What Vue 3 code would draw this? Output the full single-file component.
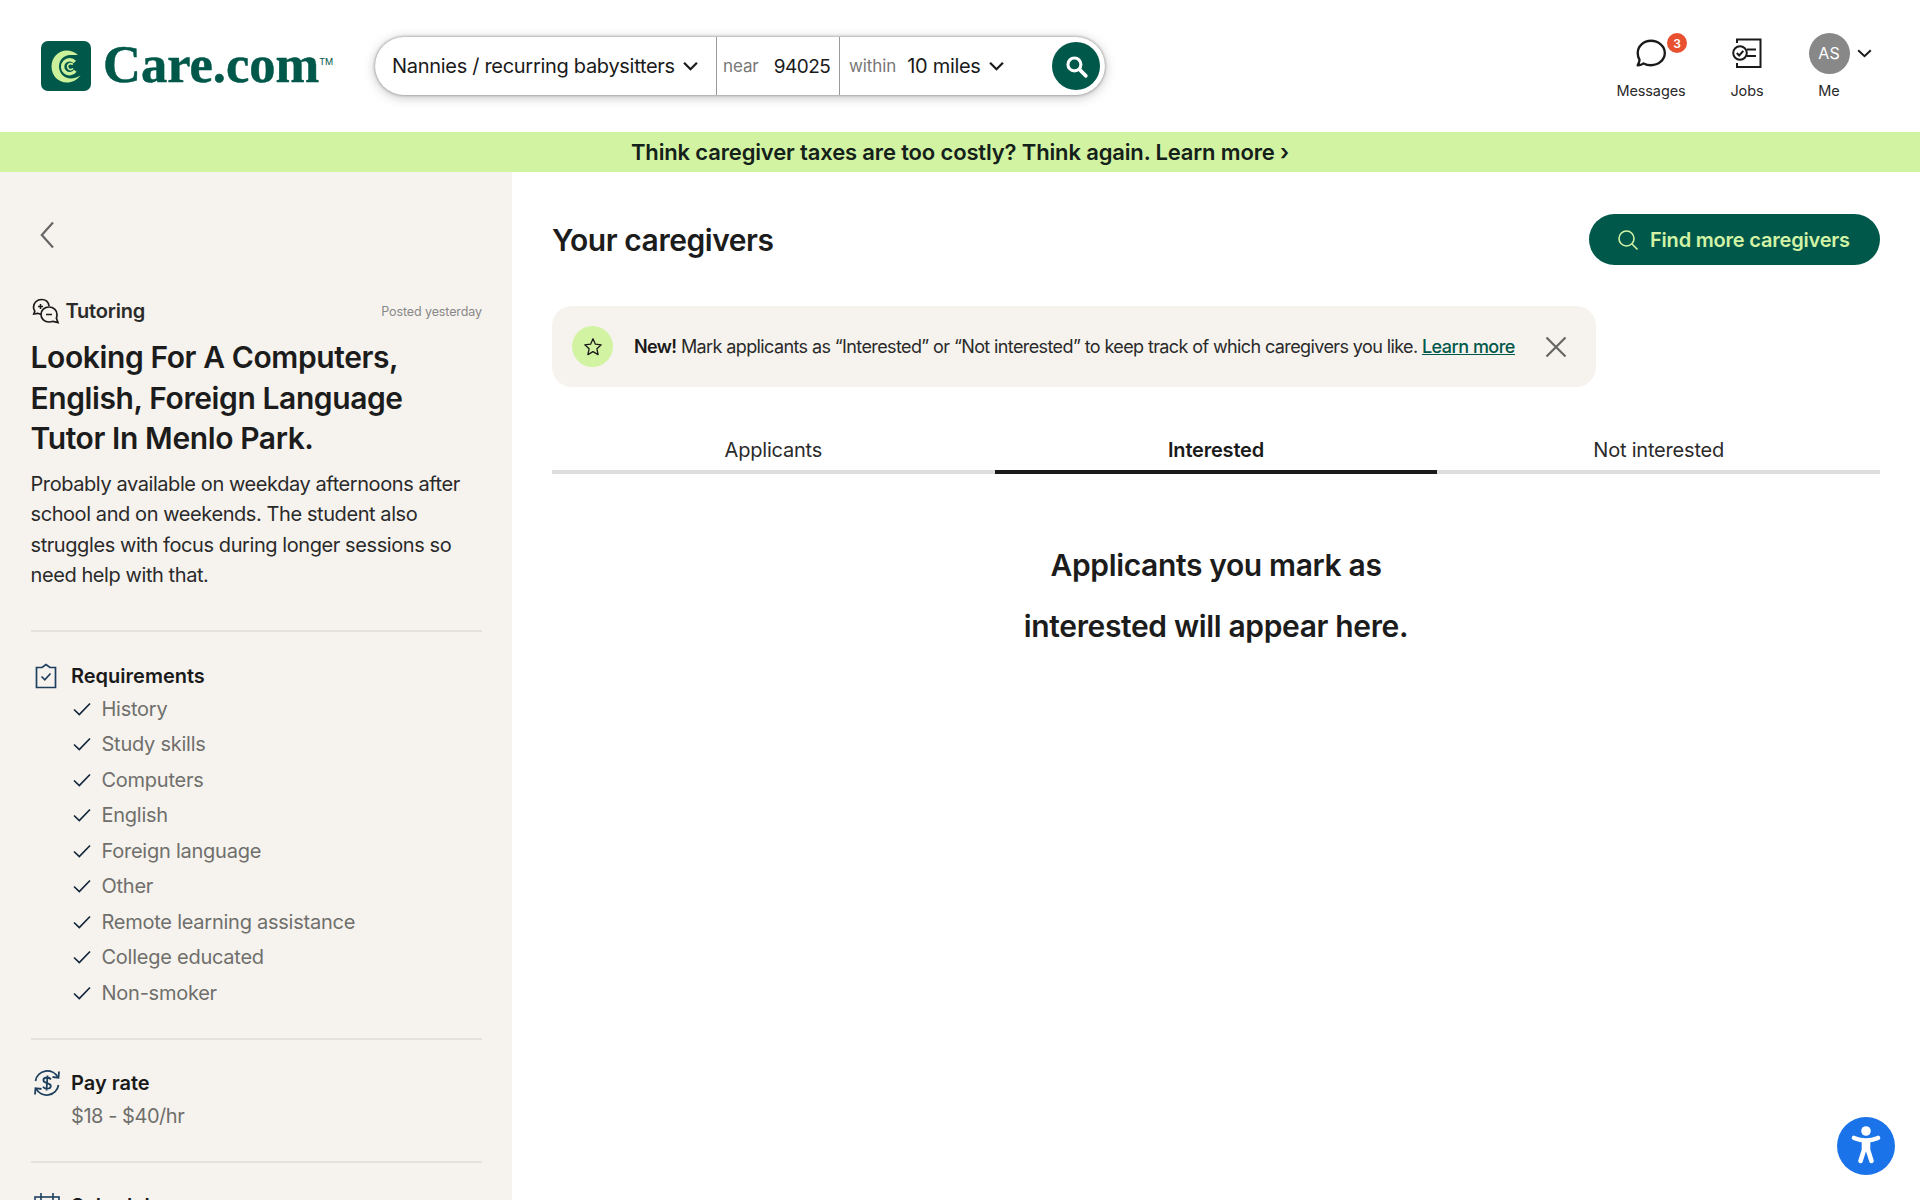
<script setup>
const reqs = ['History','Study skills','Computers','English','Foreign language','Other','Remote learning assistance','College educated','Non-smoker']
const tabs = [
  { label: 'Applicants', active: false },
  { label: 'Interested', active: true },
  { label: 'Not interested', active: false },
]
</script>

<template>
  <div class="page">
    <header class="header">
      <div class="logo">
        <svg class="logo-mark" viewBox="0 0 50 50" width="50" height="50">
          <rect width="50" height="50" rx="7" fill="#00584a"/>
          <path d="M37 14C33 10.500 29 9.500 26 9.500C17 9.500 10.500 16.500 10.500 25.500C10.500 34.500 17 41.500 26 41.500C31 41.500 36 39 39.500 34.500C36 36.500 33 37.500 30 37.500C23 37.500 18 32 18 25.500C18 19 23 14 29 14C32 14 34.500 14 37 14Z" fill="#cdf09a"/>
          <path d="M33.800 21A7 7 0 1 0 34.300 29.800" fill="none" stroke="#cdf09a" stroke-width="3.400"/>
          <path d="M31.800 23.600A3 3 0 1 0 32 27.400" fill="none" stroke="#cdf09a" stroke-width="1.600"/>
        </svg>
        <span class="wordmark">Care.com</span><span class="tm">TM</span>
      </div>

      <div class="search">
        <div class="seg seg-type">
          <span class="val">Nannies / recurring babysitters</span>
          <svg class="chev" viewBox="0 0 14 9" width="15" height="10"><path d="M1 1.500L7 7.500L13 1.500" fill="none" stroke="#1a1a1a" stroke-width="2.100"/></svg>
        </div>
        <div class="seg seg-near"><span class="hint">near</span><span class="val zip">94025</span></div>
        <div class="seg seg-within">
          <span class="hint">within</span><span class="val">10 miles</span>
          <svg class="chev" viewBox="0 0 14 9" width="15" height="10"><path d="M1 1.500L7 7.500L13 1.500" fill="none" stroke="#1a1a1a" stroke-width="2.100"/></svg>
        </div>
        <button class="search-btn" aria-label="Search">
          <svg viewBox="0 0 24 24" width="25" height="25"><circle cx="10" cy="10" r="6.200" fill="none" stroke="#fff" stroke-width="3"/><path d="M15 15L21 21" stroke="#fff" stroke-width="3.400" stroke-linecap="round"/></svg>
        </button>
      </div>

      <nav class="nav">
        <div class="nav-item nav-msg">
          <div class="nav-icon">
            <svg viewBox="0 0 32 30" width="34" height="32"><path d="M3.500 15C3.500 8.500 9 3.500 16 3.500C23 3.500 29 8.500 29 15C29 21.500 23 26.500 16 26.500C13.500 26.500 11 25.900 9 24.800C7.500 26 5.500 26.600 3.500 26.500C4.500 25 5 23.500 5.200 21.500C4 19.500 3.500 17.300 3.500 15Z" fill="none" stroke="#1a1a1a" stroke-width="2.200" stroke-linejoin="round"/></svg>
            <span class="badge">3</span>
          </div>
          <span class="nav-label">Messages</span>
        </div>
        <div class="nav-item nav-jobs">
          <div class="nav-icon">
            <svg viewBox="0 0 32 32" width="32" height="32"><path d="M6 6V2.500H29.500V30H6V26" fill="none" stroke="#1a1a1a" stroke-width="2"/><circle cx="9" cy="16" r="6.800" fill="none" stroke="#1a1a1a" stroke-width="2"/><path d="M5.800 16L8.200 18.500L12.300 13.800" fill="none" stroke="#1a1a1a" stroke-width="2"/><path d="M15.800 12.500H25M15.800 19H25" stroke="#1a1a1a" stroke-width="2"/></svg>
          </div>
          <span class="nav-label">Jobs</span>
        </div>
        <div class="nav-item nav-me">
          <div class="nav-icon">
            <span class="avatar">AS</span>
            <svg class="me-chev" viewBox="0 0 16 10" width="15" height="9"><path d="M1 1.500L8 8L15 1.500" fill="none" stroke="#1a1a1a" stroke-width="2.200"/></svg>
          </div>
          <span class="nav-label">Me</span>
        </div>
      </nav>
    </header>

    <div class="promo">Think caregiver taxes are too costly? Think again. Learn more ›</div>

    <div class="body">
      <aside class="side">
        <svg class="back" viewBox="0 0 14 28" width="14" height="28"><path d="M13 1.500L1.800 14L13 26.500" fill="none" stroke="#666" stroke-width="2.200"/></svg>

        <div class="job-top">
          <div class="job-type">
            <svg viewBox="0 0 28 28" width="28" height="28" fill="none" stroke="#1a1a1a" stroke-width="1.700">
              <path d="M17 9C16.500 5 13.500 2.500 9.500 2.500C5 2.500 1.500 6 1.500 10C1.500 11.500 2 13 2.800 14.200L1.800 17L5.500 16.300C6.500 16.800 7.500 17 9 17.200"/>
              <path d="M17 10C21.500 10 25 13 25 17.500C25 19.300 24.600 20.500 24.400 21.200L26 25.500L21 24.300C20 24.800 18.500 25 17 25C12.500 25 9 21.800 9 17.500C9 13.300 12.500 10 17 10Z"/>
              <path d="M6 9.500H11M8.500 7V12M14 17.500H20M17 14.500V14.600M17 20.400V20.500" stroke-width="1.500"/>
            </svg>
            <span>Tutoring</span>
          </div>
          <span class="posted">Posted yesterday</span>
        </div>

        <h1 class="job-title">Looking For A Computers, English, Foreign Language Tutor In Menlo Park.</h1>
        <p class="job-desc">Probably available on weekday afternoons after school and on weekends. The student also struggles with focus during longer sessions so need help with that.</p>

        <section class="sec sec-req">
          <div class="sec-head">
            <svg class="sec-icon" viewBox="0 0 24 26" width="24" height="26" fill="none" stroke="#1d3f5e" stroke-width="1.700">
              <path d="M8 4.500H2.500V24.500H21.500V4.500H16L12 1.500Z"/>
              <path d="M7.500 13.500L10.800 16.800L16.500 10.500"/>
            </svg>
            <h2>Requirements</h2>
          </div>
          <ul class="req-list">
            <li v-for="r in reqs" :key="r">
              <svg viewBox="0 0 18 14" width="18" height="14"><path d="M1 7.500L6.300 12.500L17 1.500" fill="none" stroke="#13263b" stroke-width="1.700"/></svg>
              <span>{{ r }}</span>
            </li>
          </ul>
        </section>

        <section class="sec sec-pay">
          <div class="sec-head">
            <svg class="sec-icon" viewBox="0 0 30 30" width="30" height="30" fill="none" stroke="#1d3f5e" stroke-width="1.800">
              <path d="M3.500 13A12 12 0 0 1 26 9.500"/>
              <path d="M27 3.500L26.500 9.800L20.500 9"/>
              <path d="M26.500 17A12 12 0 0 1 4 20.500"/>
              <path d="M3 26.500L3.500 20.200L9.500 21"/>
              <path d="M19 11.500C18 10 16.500 9.500 15 9.500C12.800 9.500 11.400 10.600 11.400 12.200C11.400 16 18.800 14.200 18.800 18C18.800 19.600 17.200 20.700 15 20.700C13.300 20.700 11.800 20 11 18.800M15.500 7.500L14.500 22.500"/>
            </svg>
            <h2>Pay rate</h2>
          </div>
          <div class="pay">$18 - $40/hr</div>
        </section>

        <section class="sec sec-sched">
          <div class="sec-head">
            <svg class="sec-icon" viewBox="0 0 30 30" width="30" height="30" fill="none" stroke="#1d3f5e" stroke-width="1.600">
              <rect x="3" y="6" width="24" height="22"/><path d="M9 2V9M21 2V9M3 12H27"/>
            </svg>
            <h2>Schedule</h2>
          </div>
        </section>
      </aside>

      <main class="main">
        <div class="main-head">
          <h2 class="main-title">Your caregivers</h2>
          <button class="find-btn">
            <svg viewBox="0 0 22 22" width="22" height="22"><circle cx="9.500" cy="9.500" r="7.500" fill="none" stroke="#d2f3a6" stroke-width="1.600"/><path d="M15 15L20.500 20.500" stroke="#d2f3a6" stroke-width="1.600"/></svg>
            <span>Find more caregivers</span>
          </button>
        </div>

        <div class="notice">
          <span class="star">
            <svg viewBox="0 0 20 20" width="20" height="20"><path d="M10 1.800L12.400 7.200L18.200 7.800L13.900 11.800L15.100 17.600L10 14.600L4.900 17.600L6.100 11.800L1.800 7.800L7.600 7.200Z" fill="none" stroke="#1a1a1a" stroke-width="1.300" stroke-linejoin="round"/></svg>
          </span>
          <p class="notice-text"><b>New!</b> Mark applicants as “Interested” or “Not interested” to keep track of which caregivers you like. <a>Learn more</a></p>
          <svg class="close" viewBox="0 0 22 22" width="22" height="22"><path d="M1.500 1.500L20.500 20.500M20.500 1.500L1.500 20.500" stroke="#666" stroke-width="2.200"/></svg>
        </div>

        <div class="tabs">
          <div v-for="t in tabs" :key="t.label" class="tab" :class="{ active: t.active }">{{ t.label }}</div>
        </div>

        <div class="empty">Applicants you mark as<br>interested will appear here.</div>
      </main>
    </div>

    <button class="a11y" aria-label="Accessibility">
      <svg viewBox="0 0 58 58" width="58" height="58">
        <circle cx="29" cy="14" r="4.800" fill="#fff"/>
        <path d="M17 21Q23 23.500 29 23.500Q35 23.500 41 21" fill="none" stroke="#fff" stroke-width="4.600" stroke-linecap="round"/>
        <path d="M23.500 44L27 33V24M34.500 44L31 33V24" fill="none" stroke="#fff" stroke-width="4.600" stroke-linecap="round" stroke-linejoin="round"/>
      </svg>
    </button>
  </div>
</template>

<style>
html, body { margin: 0; background: #fff; height: 100%; overflow: hidden; }
</style>

<style scoped>
* { box-sizing: border-box; }
.page {
  position: relative;
  width: 1920px;
  height: 1200px;
  overflow: hidden;
  font-family: Inter, "Liberation Sans", sans-serif;
  color: #1a1a1a;
  background: #fff;
}
.header {
  height: 132px;
  display: flex;
  align-items: flex-start;
  padding: 37px 0 0 41px;
}
.logo {
  display: flex;
  align-items: center;
  width: 334px;
  height: 58px;
  flex: none;
}
.logo-mark { flex: none; margin-right: 12px; }
.wordmark {
  font-family: "Liberation Serif", serif;
  font-weight: 700;
  font-size: 52.500px;
  line-height: 58px;
  margin-bottom: 4px;
  color: #00584a;
  -webkit-text-stroke: 0.5px #00584a;
}
.tm {
  font-size: 9px;
  color: #00584a;
  align-self: flex-start;
  margin-top: 19px;
}
.search {
  display: flex;
  align-items: center;
  width: 730px;
  height: 58px;
  flex: none;
  background: #fff;
  border-radius: 29px;
  box-shadow: 0 0 3px rgba(0,0,0,.45), 0 2px 12px rgba(0,0,0,.25);
  position: relative;
}
.seg {
  height: 100%;
  display: flex;
  align-items: center;
  font-size: 20px;
  flex: none;
}
.val { white-space: nowrap; letter-spacing: -0.3px; }
.zip { font-size: 19px; letter-spacing: -0.5px; }
.hint { color: #777; font-size: 17px; letter-spacing: -0.1px; }
.seg-type { width: 342px; padding-left: 17px; border-right: 1.500px solid #999; }
.seg-type .chev { margin-left: 8px; }
.seg-near { width: 123px; padding-left: 6px; border-right: 1.500px solid #999; }
.seg-near .val { margin-left: 15px; }
.seg-within { padding-left: 9px; }
.seg-within .val { margin-left: 11px; }
.seg-within .chev { margin-left: 8px; }
.search-btn {
  position: absolute;
  right: 5px;
  top: 5px;
  width: 48px;
  height: 48px;
  border-radius: 50%;
  border: 0;
  padding: 0;
  background: #00584a;
  display: flex;
  align-items: center;
  justify-content: center;
}
.nav {
  margin-left: auto;
  display: flex;
  height: 100px;
}
.nav-item {
  display: flex;
  flex-direction: column;
  align-items: center;
  position: relative;
}
.nav-msg { width: 96px; }
.nav-jobs { width: 96px; }
.nav-me { width: 68px; margin-right: 57px; }
.nav-icon {
  height: 46px;
  margin-top: -7px;
  display: flex;
  align-items: center;
  justify-content: center;
  position: relative;
}
.nav-label { font-size: 14.500px; line-height: 18px; margin-top: 6px; letter-spacing: -0.1px; color: #2a2a2a; }
.badge {
  position: absolute;
  left: 33px;
  top: 3px;
  width: 20px;
  height: 20px;
  border-radius: 50%;
  background: #e8502f;
  color: #fff;
  font-size: 12px;
  font-weight: 600;
  display: flex;
  align-items: center;
  justify-content: center;
}
.avatar {
  width: 41px;
  height: 41px;
  border-radius: 50%;
  background: #888;
  color: #fff;
  font-size: 16px;
  display: flex;
  align-items: center;
  justify-content: center;
}
.me-chev { position: absolute; left: 48px; top: 19px; }
.promo {
  height: 40px;
  background: #d2f3a2;
  text-align: center;
  font-size: 22px;
  font-weight: 600;
  line-height: 40px;
  letter-spacing: -0.15px;
  color: #14201a;
}
.body { display: flex; height: 1028px; }
.side {
  width: 512px;
  flex: none;
  background: #f6f3ee;
  padding: 48px 30px 0 30.500px;
  overflow: hidden;
}
.back { display: block; margin: 1px 0 0 9.500px; }
.job-top {
  display: flex;
  align-items: center;
  justify-content: space-between;
  margin-top: 48px;
  height: 28px;
}
.job-type {
  display: flex;
  align-items: center;
  gap: 6px;
  font-size: 20px;
  font-weight: 600;
  letter-spacing: -0.2px;
  color: #2a2a2a;
}
.job-type svg { margin-left: 1px; }
.posted { font-size: 12.500px; color: #888; letter-spacing: -0.1px; }
.job-title {
  margin: 12px 0 0;
  max-width: 440px;
  font-size: 30px;
  line-height: 40.500px;
  font-weight: 600;
  letter-spacing: -0.4px;
  color: #1c1c1c;
}
.job-desc {
  margin: 10px 0 0;
  font-size: 20px;
  line-height: 30.600px;
  letter-spacing: -0.42px;
  color: #2a2a2a;
}
.sec { border-top: 2px solid #e4e2dd; }
.sec-req { margin-top: 39px; padding-top: 31px; padding-bottom: 28px; }
.sec-pay { padding-top: 30px; padding-bottom: 30px; }
.sec-sched { padding-top: 30px; }
.sec-head { display: flex; align-items: center; height: 26px; position: relative; padding-left: 40.500px; }
.sec-icon { position: absolute; left: 3px; top: 50%; transform: translateY(-50%); }
.sec-pay .sec-icon, .sec-sched .sec-icon { left: 1px; }
.sec-head h2 {
  margin: 0;
  font-size: 20px;
  font-weight: 600;
  letter-spacing: 0;
  color: #1a1a1a;
}
.req-list { list-style: none; margin: 2px 0 0; padding: 0 0 0 42px; }
.req-list li {
  display: flex;
  align-items: center;
  height: 35.500px;
  font-size: 20px;
  letter-spacing: -0.25px;
  color: #6f6f6c;
}
.req-list svg { margin: 0 11px 0 0; flex: none; }
.pay { margin: 5px 0 0 40.500px; font-size: 20px; line-height: 30px; letter-spacing: -0.45px; color: #6f6f6c; }
.main { flex: 1; padding: 42px 40px 0; min-width: 0; }
.main-head { display: flex; align-items: center; justify-content: space-between; height: 51px; }
.main-title {
  margin: 0;
  font-size: 30px;
  font-weight: 600;
  letter-spacing: -0.45px;
  color: #1c1c1c;
  position: relative;
}
.find-btn {
  width: 291px;
  height: 51px;
  border: 0;
  border-radius: 26px;
  background: #00584a;
  color: #d2f3a6;
  font-family: inherit;
  font-size: 20px;
  font-weight: 600;
  letter-spacing: -0.2px;
  display: flex;
  align-items: center;
  padding: 0 0 0 28px;
  gap: 11px;
}
.notice {
  margin-top: 41px;
  width: 1044px;
  height: 81px;
  background: #f6f3ee;
  border-radius: 20px;
  display: flex;
  align-items: center;
  padding: 0 0 0 20px;
}
.star {
  width: 41px;
  height: 41px;
  border-radius: 50%;
  background: #d2f3a2;
  display: flex;
  align-items: center;
  justify-content: center;
  flex: none;
}
.notice-text {
  margin: 0 0 0 21px;
  width: 883px;
  flex: none;
  font-size: 18px;
  letter-spacing: -0.61px;
  white-space: nowrap;
  color: #2a2a2a;
}
.notice-text b { font-weight: 600; color: #1a1a1a; }
.notice-text a { color: #00584a; font-weight: 500; text-decoration: underline; letter-spacing: -0.5px; }
.close { margin-left: 28px; flex: none; }
.tabs { margin-top: 50px; display: grid; grid-template-columns: repeat(3, 1fr); }
.tab {
  height: 37px;
  text-align: center;
  font-size: 20px;
  line-height: 26px;
  letter-spacing: -0.2px;
  color: #2a2a2a;
  border-bottom: 4px solid #ddd;
}
.tab.active { border-bottom-color: #1a1a1a; font-weight: 600; color: #1a1a1a; }
.empty {
  margin-top: 61px;
  text-align: center;
  font-size: 30px;
  line-height: 61px;
  font-weight: 600;
  letter-spacing: -0.36px;
  color: #1c1c1c;
}
.a11y {
  position: absolute;
  left: 1837px;
  top: 1117px;
  width: 58px;
  height: 58px;
  border: 0;
  padding: 0;
  border-radius: 50%;
  background: #1a73e8;
}
.a11y svg { display: block; }
</style>
